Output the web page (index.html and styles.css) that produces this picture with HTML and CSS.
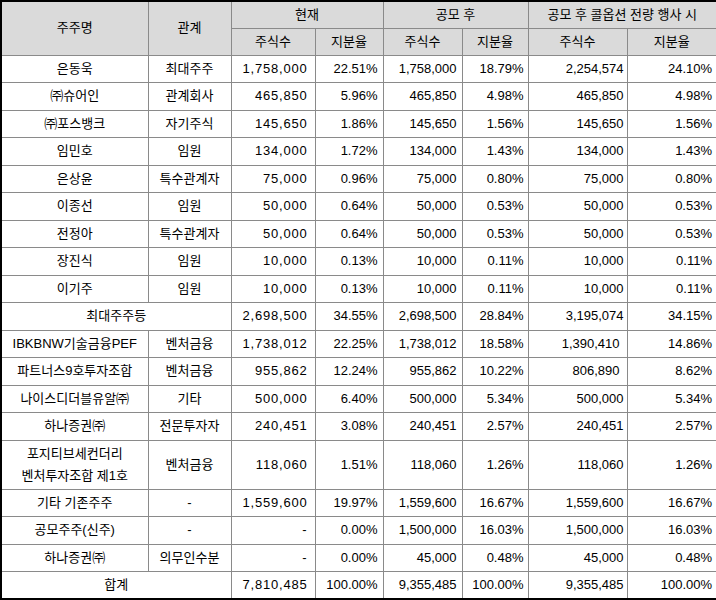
FILE: index.html
```html
<!DOCTYPE html>
<html lang="ko">
<head>
<meta charset="utf-8">
<link rel="stylesheet" href="styles.css">
</head>
<body>
<table class="sh">
  <colgroup>
    <col class="w1"><col class="w2"><col class="w3"><col class="w4"><col class="w5"><col class="w6"><col class="w7"><col class="w8">
  </colgroup>
  <thead>
    <tr class="h1">
      <th rowspan="2">주주명</th>
      <th rowspan="2">관계</th>
      <th colspan="2">현재</th>
      <th colspan="2">공모 후</th>
      <th colspan="2">공모 후 콜옵션 전량 행사 시</th>
    </tr>
    <tr class="h2">
      <th>주식수</th><th>지분율</th>
      <th>주식수</th><th>지분율</th>
      <th>주식수</th><th>지분율</th>
    </tr>
  </thead>
  <tbody>
    <tr><td class="c">은동욱</td><td class="c">최대주주</td><td class="n3">1,758,000</td><td class="p4">22.51%</td><td class="n5">1,758,000</td><td class="p6">18.79%</td><td class="n7">2,254,574</td><td class="p8">24.10%</td></tr>
    <tr><td class="c">㈜슈어인</td><td class="c">관계회사</td><td class="n3">465,850</td><td class="p4">5.96%</td><td class="n5">465,850</td><td class="p6">4.98%</td><td class="n7">465,850</td><td class="p8">4.98%</td></tr>
    <tr><td class="c">㈜포스뱅크</td><td class="c">자기주식</td><td class="n3">145,650</td><td class="p4">1.86%</td><td class="n5">145,650</td><td class="p6">1.56%</td><td class="n7">145,650</td><td class="p8">1.56%</td></tr>
    <tr><td class="c">임민호</td><td class="c">임원</td><td class="n3">134,000</td><td class="p4">1.72%</td><td class="n5">134,000</td><td class="p6">1.43%</td><td class="n7">134,000</td><td class="p8">1.43%</td></tr>
    <tr><td class="c">은상윤</td><td class="c">특수관계자</td><td class="n3">75,000</td><td class="p4">0.96%</td><td class="n5">75,000</td><td class="p6">0.80%</td><td class="n7">75,000</td><td class="p8">0.80%</td></tr>
    <tr><td class="c">이종선</td><td class="c">임원</td><td class="n3">50,000</td><td class="p4">0.64%</td><td class="n5">50,000</td><td class="p6">0.53%</td><td class="n7">50,000</td><td class="p8">0.53%</td></tr>
    <tr><td class="c">전정아</td><td class="c">특수관계자</td><td class="n3">50,000</td><td class="p4">0.64%</td><td class="n5">50,000</td><td class="p6">0.53%</td><td class="n7">50,000</td><td class="p8">0.53%</td></tr>
    <tr><td class="c">장진식</td><td class="c">임원</td><td class="n3">10,000</td><td class="p4">0.13%</td><td class="n5">10,000</td><td class="p6">0.11%</td><td class="n7">10,000</td><td class="p8">0.11%</td></tr>
    <tr><td class="c">이기주</td><td class="c">임원</td><td class="n3">10,000</td><td class="p4">0.13%</td><td class="n5">10,000</td><td class="p6">0.11%</td><td class="n7">10,000</td><td class="p8">0.11%</td></tr>
    <tr><td class="c" colspan="2">최대주주등</td><td class="n3">2,698,500</td><td class="p4">34.55%</td><td class="n5">2,698,500</td><td class="p6">28.84%</td><td class="n7">3,195,074</td><td class="p8">34.15%</td></tr>
    <tr><td class="c">IBKBNW기술금융PEF</td><td class="c">벤처금융</td><td class="n3">1,738,012</td><td class="p4">22.25%</td><td class="n5">1,738,012</td><td class="p6">18.58%</td><td class="n7 in">1,390,410</td><td class="p8">14.86%</td></tr>
    <tr><td class="c">파트너스9호투자조합</td><td class="c">벤처금융</td><td class="n3">955,862</td><td class="p4">12.24%</td><td class="n5">955,862</td><td class="p6">10.22%</td><td class="n7 in">806,890</td><td class="p8">8.62%</td></tr>
    <tr><td class="c">나이스디더블유알㈜</td><td class="c">기타</td><td class="n3">500,000</td><td class="p4">6.40%</td><td class="n5">500,000</td><td class="p6">5.34%</td><td class="n7">500,000</td><td class="p8">5.34%</td></tr>
    <tr><td class="c">하나증권㈜</td><td class="c">전문투자자</td><td class="n3">240,451</td><td class="p4">3.08%</td><td class="n5">240,451</td><td class="p6">2.57%</td><td class="n7">240,451</td><td class="p8">2.57%</td></tr>
    <tr class="tall"><td class="c">포지티브세컨더리<br>벤처투자조합 제1호</td><td class="c">벤처금융</td><td class="n3">118,060</td><td class="p4">1.51%</td><td class="n5">118,060</td><td class="p6">1.26%</td><td class="n7">118,060</td><td class="p8">1.26%</td></tr>
    <tr><td class="c">기타 기존주주</td><td class="c">-</td><td class="n3">1,559,600</td><td class="p4">19.97%</td><td class="n5">1,559,600</td><td class="p6">16.67%</td><td class="n7">1,559,600</td><td class="p8">16.67%</td></tr>
    <tr><td class="c">공모주주(신주)</td><td class="c">-</td><td class="n3">-</td><td class="p4">0.00%</td><td class="n5">1,500,000</td><td class="p6">16.03%</td><td class="n7">1,500,000</td><td class="p8">16.03%</td></tr>
    <tr><td class="c">하나증권㈜</td><td class="c">의무인수분</td><td class="n3">-</td><td class="p4">0.00%</td><td class="n5">45,000</td><td class="p6">0.48%</td><td class="n7">45,000</td><td class="p8">0.48%</td></tr>
    <tr><td class="c" colspan="2">합계</td><td class="n3">7,810,485</td><td class="p4">100.00%</td><td class="n5">9,355,485</td><td class="p6">100.00%</td><td class="n7">9,355,485</td><td class="p8">100.00%</td></tr>
  </tbody>
</table>
</body>
</html>
```

FILE: styles.css
```css
html, body {
  margin: 0;
  padding: 0;
  background: #fff;
}

.sh {
  width: 716px;
  height: 600px;
  table-layout: fixed;
  border-collapse: collapse;
  border: 2px solid #000;
  font-family: "Liberation Sans", "Noto Sans CJK KR", sans-serif;
  font-size: 13px;
  color: #000;
}

.w1 { width: 147px; }
.w2 { width: 83px; }
.w3 { width: 84px; }
.w4 { width: 68px; }
.w5 { width: 79px; }
.w6 { width: 66px; }
.w7 { width: 99px; }
.w8 { width: 90px; }

.sh th,
.sh td {
  border: 1px solid #8a8a8a;
  padding: 0;
  vertical-align: middle;
  white-space: nowrap;
  overflow: hidden;
  line-height: 16px;
}

.sh th {
  background: #dadada;
  font-weight: normal;
  text-align: center;
}

.h1 { height: 27px; }
.h2 { height: 27px; }

.sh tbody tr { height: 27.5px; }
.sh tbody tr.tall { height: 49px; }

.c { text-align: center; }

.tall .c { line-height: 22px; }

.n3, .p4, .n5, .p6, .n7, .p8 { text-align: right; }

.n3 { padding-right: 7px !important; letter-spacing: 0.8px; }
.p4 { padding-right: 5px !important; }
.n5 { padding-right: 5px !important; }
.p6 { padding-right: 4px !important; }
.n7 { padding-right: 3px !important; }
.n7.in { padding-right: 7px !important; }
.p8 { padding-right: 4px !important; }
```
